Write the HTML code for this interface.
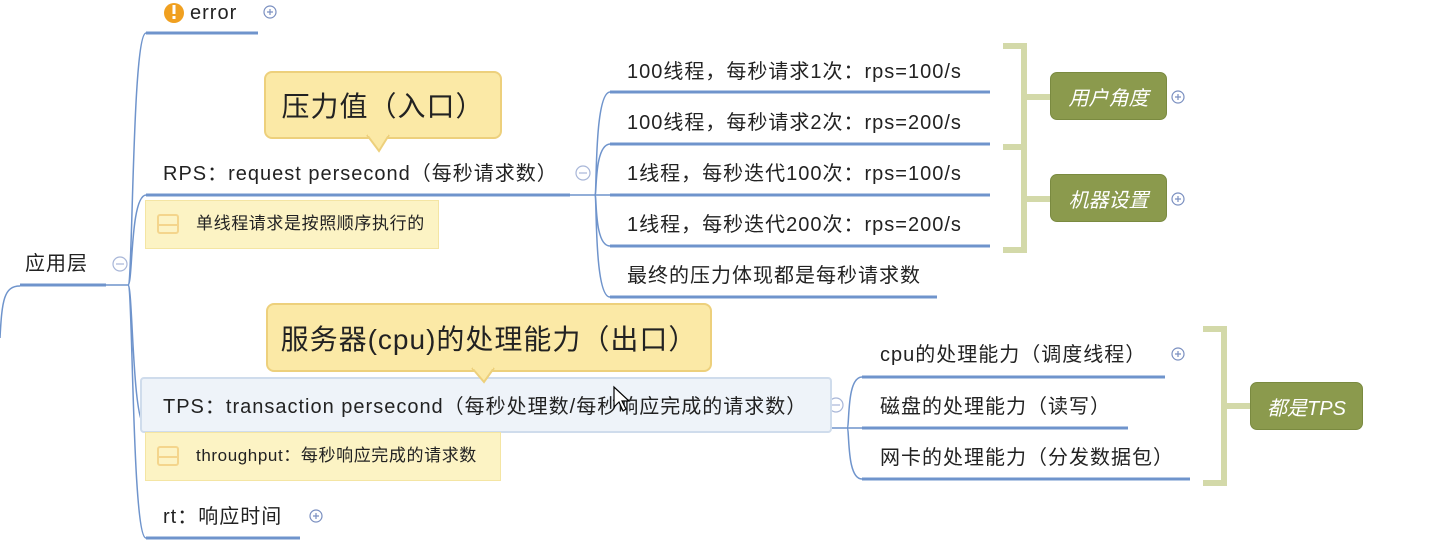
<!DOCTYPE html><html><head><meta charset="utf-8"><style>
body{margin:0;width:1432px;height:540px;background:#fff;position:relative;overflow:hidden;font-family:"Liberation Sans","Noto Sans CJK SC",sans-serif;color:#222}
.t{position:absolute;white-space:nowrap;font-size:20px;line-height:24px;letter-spacing:1px}
.s{font-size:17px;letter-spacing:0.6px}
.g{position:absolute;background:#8b9a4d;border-radius:7px;color:#fff;font-style:italic;font-size:20px;display:flex;align-items:center;justify-content:center;border:1px solid #7a8a40;white-space:nowrap}
.n{position:absolute;background:#fcf3c4;border:1px solid #f4e5a3}
.c{position:absolute;background:#fbe9a6;border:2px solid #edd07c;border-radius:8px;font-size:28px;display:flex;align-items:center;justify-content:center;white-space:nowrap;letter-spacing:1px}
</style></head><body>
<svg width="1432" height="540" style="position:absolute;left:0;top:0">
<g fill="none" stroke="#6f94cc">
<path d="M0,338 C2,300 4,286 20,286" stroke-width="1.5"/>
<line x1="20" y1="285" x2="106" y2="285" stroke-width="3"/>
<path d="M106,285 L128,285 M128,285 C133,285 132,34 146,33" stroke-width="1.5"/>
<path d="M128,285 C133,285 130,196 146,195" stroke-width="1.5"/>
<path d="M128,285 C133,285 132,427 146,427" stroke-width="1.5"/>
<path d="M128,285 C133,285 132,538 146,538" stroke-width="1.5"/>
<line x1="146" y1="33" x2="258" y2="33" stroke-width="3"/>
<line x1="146" y1="195" x2="570" y2="195" stroke-width="3"/>
<line x1="146" y1="538" x2="300" y2="538" stroke-width="3"/>
<path d="M570,195 L610,195 M595,195 C597,195 594,93 610,92 M595,195 C597,195 594,145 610,144 M595,195 C597,195 594,246 610,246 M595,195 C597,195 594,297 610,297" stroke-width="1.5"/>
<line x1="610" y1="92" x2="990" y2="92" stroke-width="3"/>
<line x1="610" y1="144" x2="990" y2="144" stroke-width="3"/>
<line x1="610" y1="195" x2="990" y2="195" stroke-width="3"/>
<line x1="610" y1="246" x2="990" y2="246" stroke-width="3"/>
<line x1="610" y1="297" x2="937" y2="297" stroke-width="3"/>
<path d="M826,428 L862,428 M847,428 C850,428 846,377 862,377 M847,428 C850,428 846,479 862,479" stroke-width="1.5"/>
<line x1="862" y1="377" x2="1165" y2="377" stroke-width="3"/>
<line x1="862" y1="428" x2="1128" y2="428" stroke-width="3"/>
<line x1="862" y1="479" x2="1190" y2="479" stroke-width="3"/>
</g>
<g fill="none" stroke="#d3d9a9" stroke-width="6">
<path d="M1003,46 H1024 V250 H1003 M1003,147 H1024 M1024,97 H1050 M1024,199 H1050"/>
<path d="M1203,329 H1224 V483 H1203 M1224,406 H1250"/>
</g>
<g fill="none" stroke="#7a8fc0" stroke-width="1.2">
<circle cx="270" cy="12" r="6"/><path d="M267,12h6M270,9v6"/>
<circle cx="1178" cy="97" r="6"/><path d="M1175,97h6M1178,94v6"/>
<circle cx="1178" cy="199" r="6"/><path d="M1175,199h6M1178,196v6"/>
<circle cx="1178" cy="354" r="6"/><path d="M1175,354h6M1178,351v6"/>
<circle cx="316" cy="516" r="6"/><path d="M313,516h6M316,513v6"/>
</g>
<g fill="none" stroke="#a8b6d8" stroke-width="1.2">
<circle cx="120" cy="264" r="7"/><path d="M116,264h8"/>
<circle cx="583" cy="173" r="7"/><path d="M579,173h8"/>
<circle cx="836" cy="405" r="7"/><path d="M832,405h8"/>
</g>
<circle cx="174" cy="13" r="10" fill="#f0a020"/>
<rect x="172.5" y="5" width="3" height="9" fill="#fff"/><rect x="172.5" y="16" width="3" height="3" fill="#fff"/>
</svg>
<div class="t" style="left:190px;top:1px">error</div>
<div class="c" style="left:264px;top:71px;width:234px;height:64px">压力值（入口）</div>
<svg style="position:absolute;left:365px;top:134px" width="30" height="20"><path d="M2,1 L14,17 L24,1" fill="#fbe9a6" stroke="#edd07c" stroke-width="2"/><rect x="3" y="0" width="20" height="2" fill="#fbe9a6"/></svg>
<div class="t" style="left:163px;top:162px">RPS：request persecond（每秒请求数）</div>
<div class="n" style="left:145px;top:200px;width:292px;height:47px"></div>
<div style="position:absolute;left:157px;top:214px;width:22px;height:20px;border:2px solid #f4d58c;border-radius:3px;box-sizing:border-box;background:linear-gradient(#fcf3c4 8px,#f4d58c 8px,#f4d58c 10px,#fcf3c4 10px)"></div>
<div class="t s" style="left:196px;top:212px">单线程请求是按照顺序执行的</div>
<div class="t" style="left:25px;top:252px">应用层</div>
<div class="t" style="left:627px;top:60px">100线程，每秒请求1次：rps=100/s</div>
<div class="t" style="left:627px;top:111px">100线程，每秒请求2次：rps=200/s</div>
<div class="t" style="left:627px;top:162px">1线程，每秒迭代100次：rps=100/s</div>
<div class="t" style="left:627px;top:213px">1线程，每秒迭代200次：rps=200/s</div>
<div class="t" style="left:627px;top:264px">最终的压力体现都是每秒请求数</div>
<div class="g" style="left:1050px;top:72px;width:115px;height:46px">用户角度</div>
<div class="g" style="left:1050px;top:174px;width:115px;height:46px">机器设置</div>
<div style="position:absolute;left:140px;top:377px;width:688px;height:52px;background:#eef3f9;border:2px solid #cfdcec;border-radius:4px"></div>
<div class="c" style="left:266px;top:303px;width:442px;height:65px">服务器(cpu)的处理能力（出口）</div>
<svg style="position:absolute;left:470px;top:367px" width="30" height="18"><path d="M2,1 L14,15 L24,1" fill="#fbe9a6" stroke="#edd07c" stroke-width="2"/><rect x="3" y="0" width="20" height="2" fill="#fbe9a6"/></svg>
<div class="t" style="left:163px;top:395px">TPS：transaction persecond（每秒处理数/每秒响应完成的请求数）</div>
<svg style="position:absolute;left:612px;top:385px" width="20" height="30"><path d="M2,2 L2,22 L7,17 L11,26 L14,24 L10,16 L17,16 Z" fill="#fff" stroke="#000" stroke-width="1.2"/></svg>
<div class="n" style="left:145px;top:432px;width:354px;height:47px"></div>
<div style="position:absolute;left:157px;top:446px;width:22px;height:20px;border:2px solid #f4d58c;border-radius:3px;box-sizing:border-box;background:linear-gradient(#fcf3c4 8px,#f4d58c 8px,#f4d58c 10px,#fcf3c4 10px)"></div>
<div class="t s" style="left:196px;top:444px">throughput：每秒响应完成的请求数</div>
<div class="t" style="left:163px;top:505px">rt：响应时间</div>
<div class="t" style="left:880px;top:343px">cpu的处理能力（调度线程）</div>
<div class="t" style="left:880px;top:395px">磁盘的处理能力（读写）</div>
<div class="t" style="left:880px;top:446px">网卡的处理能力（分发数据包）</div>
<div class="g" style="left:1250px;top:382px;width:111px;height:46px">都是TPS</div>
</body></html>
